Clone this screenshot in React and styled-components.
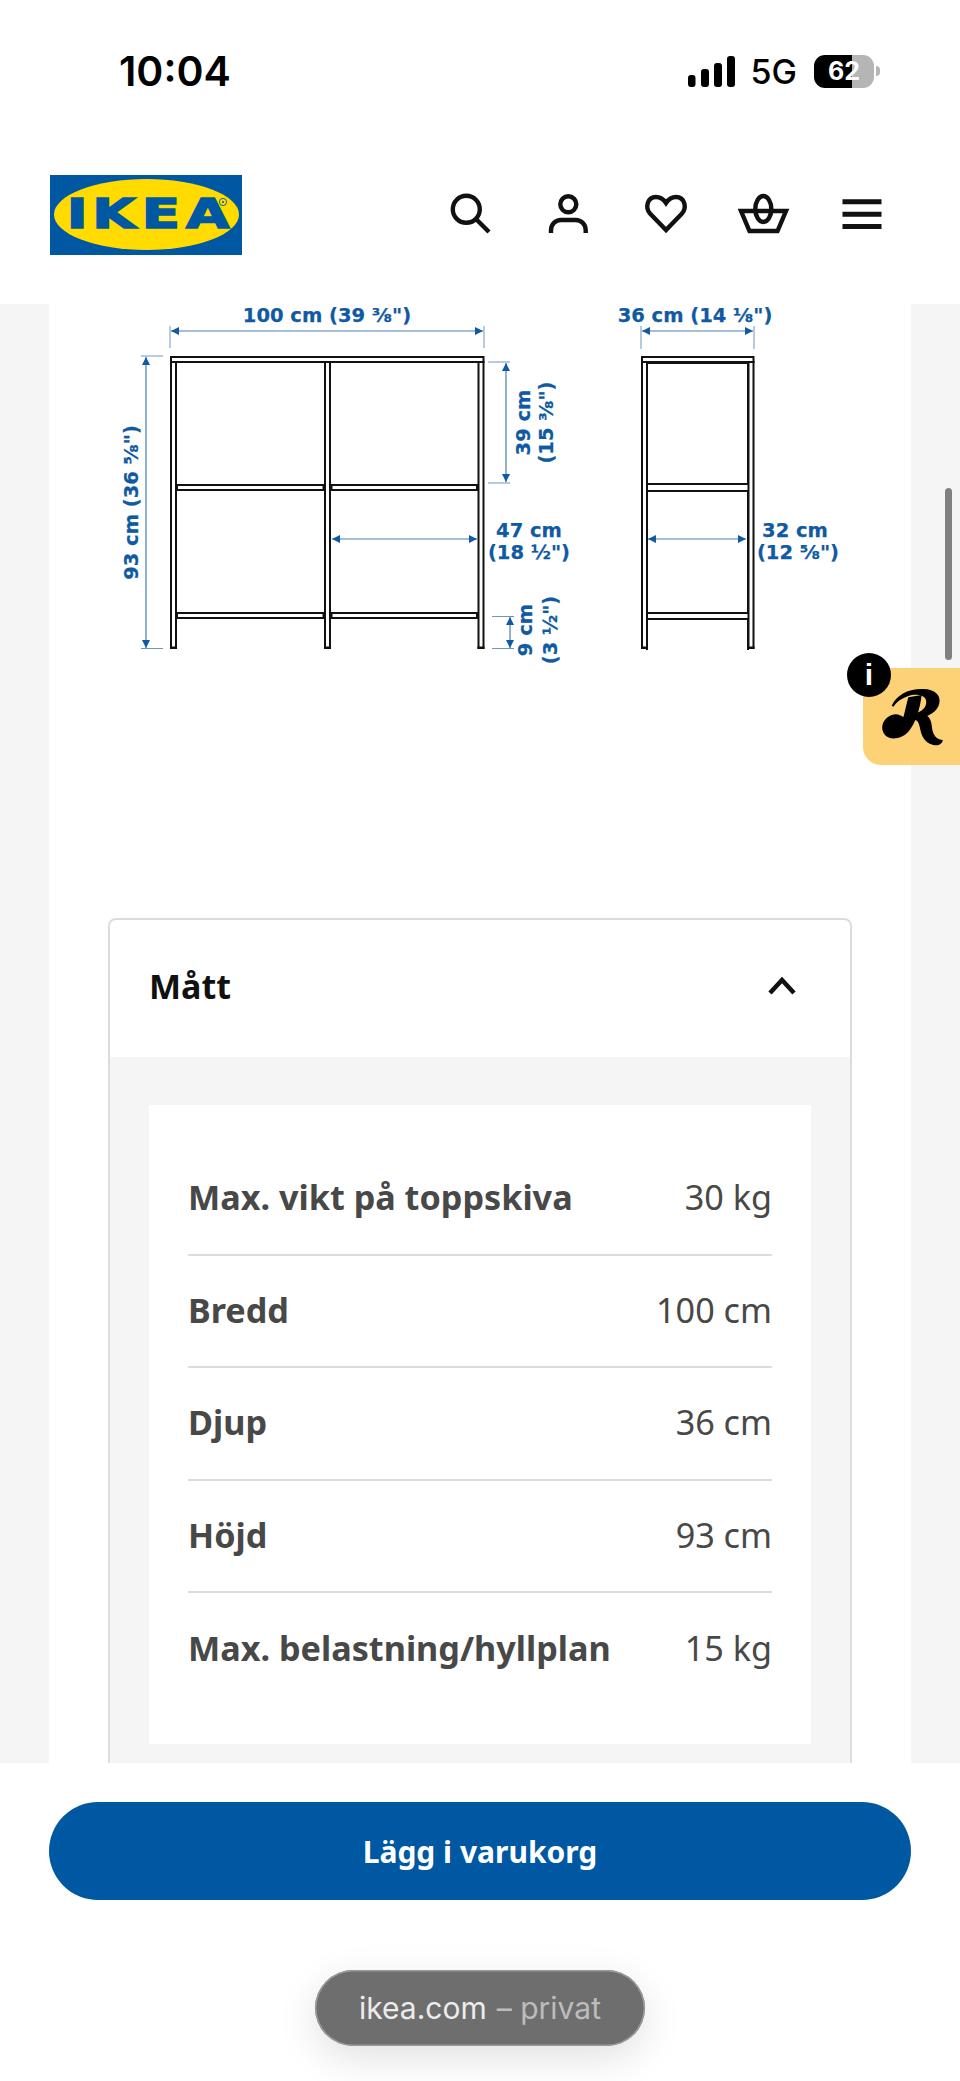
import React from 'react';
import styled, { createGlobalStyle } from 'styled-components';

const GlobalStyle = createGlobalStyle`
  html, body {
    margin: 0;
    padding: 0;
    background: #fff;
  }
  * {
    box-sizing: border-box;
  }
`;

const Page = styled.div`
  position: relative;
  width: 960px;
  height: 2081px;
  overflow: hidden;
  background: #fff;
  font-family: 'Noto Sans', sans-serif;
`;

const StatusBar = styled.div`
  display: flex;
  align-items: center;
  justify-content: space-between;
  height: 142px;
  padding: 0 86px 0 119px;
  font-family: Inter, 'Liberation Sans', sans-serif;
  color: #000;
`;

const Clock = styled.span`
  font-size: 41px;
  font-weight: 600;
`;

const StatusIcons = styled.div`
  display: flex;
  align-items: center;
`;

const NetworkLabel = styled.span`
  margin: 0 17px 0 16px;
  font-size: 34px;
  font-weight: 500;
`;

const Battery = styled.div`
  position: relative;
  display: flex;
  align-items: center;
  justify-content: center;
  width: 60px;
  height: 33px;
  border-radius: 11px;
  background: linear-gradient(to right, #000 63%, #b5b5b5 63%);
  color: #fff;
  font-size: 25px;
  font-weight: 700;

  &::after {
    content: '';
    position: absolute;
    right: -6px;
    top: 11px;
    width: 4px;
    height: 10px;
    border-radius: 0 4px 4px 0;
    background: #b5b5b5;
  }
`;

const Header = styled.header`
  display: flex;
  align-items: center;
  justify-content: space-between;
  height: 162px;
  padding: 0 70px 18px 50px;
`;

const LogoMark = styled.svg`
  display: block;
  width: 192px;
  height: 80px;
  margin-top: 2px;
`;

const NavIcons = styled.nav`
  display: flex;
  gap: 42px;
`;

const NavIcon = styled.svg`
  display: block;
  width: 56px;
  height: 56px;
  fill: none;
  stroke: #111;
  stroke-width: 4.4;
`;

const Content = styled.main`
  background: #f5f5f5;
`;

const Sheet = styled.div`
  width: 862px;
  height: 1777px;
  margin-left: 49px;
  background: #fff;
`;

const Diagram = styled.svg`
  display: block;
  width: 862px;
  height: 614px;
`;

const DimText = styled.text`
  font-family: 'DejaVu Sans', sans-serif;
  font-size: 19.5px;
  font-weight: 700;
  fill: #0f5aa3;
  stroke: #0f5aa3;
  stroke-width: 0.25;
  text-anchor: middle;
  dominant-baseline: central;
`;

const Accordion = styled.section`
  width: 744px;
  margin-left: 59px;
  border: solid #dcdcdc;
  border-width: 2px 2px 0;
  border-radius: 8px 8px 0 0;
`;

const AccordionHead = styled.div`
  display: flex;
  align-items: center;
  justify-content: space-between;
  height: 137px;
  padding: 0 54px 6px 39px;
`;

const AccordionTitle = styled.h2`
  margin: 0;
  font-size: 34px;
  font-weight: 700;
  color: #111;
`;

const Panel = styled.div`
  padding: 48px 39px 60px;
  background: #f5f5f5;
`;

const SpecCard = styled.div`
  padding: 38px 39px;
  background: #fff;
`;

const SpecRow = styled.div`
  display: flex;
  align-items: center;
  justify-content: space-between;
  height: 112.5px;
  padding-bottom: 3px;
  border-bottom: ${p => (p.$last ? 'none' : '2px solid #dcdcdc')};
  color: #484848;
  font-size: 34.2px;
`;

const SpecName = styled.span`
  font-weight: 700;
`;

const SpecValue = styled.span`
  font-weight: 400;
`;

const Footer = styled.footer`
  position: absolute;
  left: 0;
  right: 0;
  bottom: 0;
  display: flex;
  flex-direction: column;
  align-items: center;
  height: 318px;
  padding-top: 39px;
  background: #fff;
`;

const BuyButton = styled.button`
  width: 862px;
  height: 98px;
  border: none;
  border-radius: 49px;
  background: #0058a3;
  color: #fff;
  font-family: inherit;
  font-size: 30px;
  font-weight: 700;
`;

const AddressPill = styled.div`
  display: flex;
  align-items: center;
  justify-content: center;
  gap: 10px;
  width: 330px;
  height: 76px;
  margin-top: 70px;
  border-radius: 38px;
  background: #6e6e6e;
  box-shadow: 0 12px 40px rgba(0, 0, 0, 0.12), inset 0 0 0 1.5px #9a9a9a;
  font-family: Inter, 'Liberation Sans', sans-serif;
  font-size: 30px;
  color: #ececec;
`;

const Private = styled.span`
  color: #bcbcbc;
`;

const ScrollThumb = styled.div`
  position: absolute;
  top: 488px;
  right: 8px;
  width: 7px;
  height: 172px;
  border-radius: 4px;
  background: #808080;
`;

const ReviewBadge = styled.div`
  position: absolute;
  top: 668px;
  left: 863px;
  width: 97px;
  height: 97px;
  border-radius: 18px 0 0 18px;
  background: #fdd277;
`;

const InfoDot = styled.span`
  position: absolute;
  top: -15px;
  left: -16px;
  display: flex;
  align-items: center;
  justify-content: center;
  width: 44px;
  height: 44px;
  border-radius: 50%;
  background: #000;
  color: #fff;
  font-family: 'Liberation Sans', sans-serif;
  font-size: 30px;
  font-weight: 700;
`;

const BadgeMark = styled.svg`
  position: absolute;
  top: 17px;
  left: 17px;
  width: 66px;
  height: 72px;
`;

const specs = [
  ['Max. vikt på toppskiva', '30 kg'],
  ['Bredd', '100 cm'],
  ['Djup', '36 cm'],
  ['Höjd', '93 cm'],
  ['Max. belastning/hyllplan', '15 kg'],
];

const SignalBars = () => (
  <svg width="47" height="31" viewBox="0 0 47 31">
    <rect x="0" y="19" width="7.5" height="12" rx="3" />
    <rect x="13" y="13" width="8" height="18" rx="3" />
    <rect x="26" y="7" width="8" height="24" rx="3" />
    <rect x="39" y="0" width="8" height="31" rx="3" />
  </svg>
);

const Logo = () => (
  <LogoMark viewBox="0 0 192 80">
    <rect width="192" height="80" fill="#0058a3" />
    <ellipse cx="96.5" cy="39.5" rx="92.5" ry="35.5" fill="#ffdb00" />
    {/* stretched wide so the heavy letters sit at their own spots */}
    <text
      x="11.9 30.2 65.500 97.1"
      y="53"
      transform="scale(1.4 1)"
      fontFamily="'DejaVu Sans', sans-serif"
      fontWeight="700"
      fontSize="40"
      fill="#0058a3"
      stroke="#0058a3"
      strokeWidth="1.6"
    >
      IKEA
    </text>
    <circle cx="173" cy="27" r="3.6" fill="none" stroke="#0058a3" strokeWidth="0.9" />
    <circle cx="173" cy="27" r="1" fill="#0058a3" />
  </LogoMark>
);

const SearchIcon = () => (
  <NavIcon viewBox="0 0 56 56">
    <circle cx="24.3" cy="23.3" r="13.5" />
    <path d="M34.5 33.5 47 46" />
  </NavIcon>
);

const PersonIcon = () => (
  <NavIcon viewBox="0 0 56 56">
    <circle cx="28.3" cy="18.3" r="8" />
    <path d="M11 47v-3a10 10 0 0 1 10-10h14.7a10 10 0 0 1 10 10v3" />
  </NavIcon>
);

const HeartIcon = () => (
  <NavIcon viewBox="0 0 56 56">
    <path d="M28 44 12 27.5C7 22 9 11 18 11c5 0 8 3 10 6 2-3 5-6 10-6 9 0 11 11 6 16.5Z" />
  </NavIcon>
);

const BasketIcon = () => (
  <NavIcon viewBox="0 0 56 56">
    <path d="M5 25h45l-8.500 20h-28Z" />
    <ellipse cx="27.300" cy="23" rx="8" ry="13" />
  </NavIcon>
);

const MenuIcon = () => (
  <NavIcon viewBox="0 0 56 56">
    <path d="M8.500 15.800h39M8.500 28.200h39M8.500 40.500h39" strokeWidth="5" />
  </NavIcon>
);

// Dimension arrow with solid heads, horizontal or vertical
const DimLine = ({ x1, y1, x2, y2 }) => {
  const heads = x1 === x2
    ? [`${x1},${y1} ${x1 - 4},${y1 + 8} ${x1 + 4},${y1 + 8}`, `${x2},${y2} ${x2 - 4},${y2 - 8} ${x2 + 4},${y2 - 8}`]
    : [`${x1},${y1} ${x1 + 8},${y1 - 4} ${x1 + 8},${y1 + 4}`, `${x2},${y2} ${x2 - 8},${y2 - 4} ${x2 - 8},${y2 + 4}`];
  return (
    <g>
      <line x1={x1} y1={y1} x2={x2} y2={y2} stroke="#4a7fb5" strokeWidth="1.2" />
      {heads.map(h => <polygon key={h} points={h} fill="#0f5aa3" />)}
    </g>
  );
};

const Tick = props => <line {...props} stroke="#6c97c4" strokeWidth="1" />;

const Label = ({ x, y, turned, children }) => (
  <DimText x={x} y={y} transform={turned ? `rotate(-90 ${x} ${y})` : undefined}>
    {children}
  </DimText>
);

// Board drawn as a white bar with a black outline
const Board = ({ x, y, w, h }) => (
  <rect x={x + 1} y={y + 1} width={w - 2} height={h - 2} fill="#fff" stroke="#111" strokeWidth="2" />
);

const Leg = ({ x }) => (
  <g>
    <Board x={x} y={361} w={7} h={288} />
    <rect x={x} y={646.500} width="7" height="2.500" fill="#111" />
  </g>
);

const ShelfDrawing = () => (
  <Diagram viewBox="49 304 862 614">
    {/* front view */}
    <Leg x={170} />
    <Leg x={324} />
    <Leg x={477.500} />
    <Board x={176} y={484} w={148.500} h={7} />
    <Board x={330.500} y={484} w={147.500} h={7} />
    <Board x={176} y={612} w={148.500} h={7} />
    <Board x={330.500} y={612} w={147.500} h={7} />
    <Board x={170} y={356} w={314.500} h={7} />

    <DimLine x1={171} y1={331} x2={483} y2={331} />
    <Tick x1={170} y1={326} x2={170} y2={348} />
    <Tick x1={484} y1={326} x2={484} y2={348} />
    <Label x={327} y={315}>100 cm (39 ⅜")</Label>

    <DimLine x1={146} y1={357} x2={146} y2={648} />
    <Tick x1={141} y1={356} x2={163} y2={356} />
    <Tick x1={141} y1={648.500} x2={163} y2={648.500} />
    <Label x={131} y={502.500} turned>93 cm (36 ⅝")</Label>

    <DimLine x1={506} y1={363} x2={506} y2={482} />
    <Tick x1={488} y1={362} x2={510} y2={362} />
    <Tick x1={488} y1={483} x2={510} y2={483} />
    <Label x={523} y={422.500} turned>39 cm</Label>
    <Label x={546.500} y={422.500} turned>(15 ⅜")</Label>

    <DimLine x1={332} y1={539} x2={477} y2={539} />
    <Label x={529} y={530}>47 cm</Label>
    <Label x={529} y={552.500}>(18 ½")</Label>

    <DimLine x1={510} y1={617} x2={510} y2={648} />
    <Tick x1={492} y1={616.500} x2={514} y2={616.500} />
    <Tick x1={492} y1={648.500} x2={514} y2={648.500} />
    <Label x={525.500} y={630} turned>9 cm</Label>
    <Label x={550} y={630} turned>(3 ½")</Label>

    {/* side view */}
    <Leg x={641} />
    <Leg x={747.500} />
    <Board x={646} y={362} w={103} h={123} />
    <Board x={646} y={490} w={103} h={124} />
    <Board x={646} y={618} w={103} h={32} />
    <rect x="648" y="647" width="99" height="4" fill="#fff" />
    <Board x={641} y={356} w={113.500} h={7} />

    <DimLine x1={642} y1={331} x2={753} y2={331} />
    <Tick x1={641} y1={326} x2={641} y2={349} />
    <Tick x1={754} y1={326} x2={754} y2={349} />
    <Label x={695} y={315.500}>36 cm (14 ⅛")</Label>

    <DimLine x1={648} y1={539} x2={746} y2={539} />
    <Label x={795} y={530}>32 cm</Label>
    <Label x={798} y={552.500}>(12 ⅝")</Label>
  </Diagram>
);

const Chevron = () => (
  <svg width="28" height="18" viewBox="0 0 28 18" fill="none" stroke="#111" strokeWidth="4.500">
    <path d="M2 16 14 3l12 13" />
  </svg>
);

const App = () => (
  <Page>
    <GlobalStyle />
    <StatusBar>
      <Clock>10:04</Clock>
      <StatusIcons>
        <SignalBars />
        <NetworkLabel>5G</NetworkLabel>
        <Battery>62</Battery>
      </StatusIcons>
    </StatusBar>
    <Header>
      <Logo />
      <NavIcons>
        <SearchIcon />
        <PersonIcon />
        <HeartIcon />
        <BasketIcon />
        <MenuIcon />
      </NavIcons>
    </Header>
    <Content>
      <Sheet>
        <ShelfDrawing />
        <Accordion>
          <AccordionHead>
            <AccordionTitle>Mått</AccordionTitle>
            <Chevron />
          </AccordionHead>
          <Panel>
            <SpecCard>
              {specs.map(([name, value], i) => (
                <SpecRow key={name} $last={i === specs.length - 1}>
                  <SpecName>{name}</SpecName>
                  <SpecValue>{value}</SpecValue>
                </SpecRow>
              ))}
            </SpecCard>
          </Panel>
        </Accordion>
      </Sheet>
    </Content>
    <ScrollThumb />
    <ReviewBadge>
      <InfoDot>i</InfoDot>
      <BadgeMark viewBox="120 135 198 216">
        <path d="M155 197C170 165 205 145 250 147c35 1 53 18 48 43-5 25-33 42-66 46v-18c18-6 30-20 26-38-4-15-33-20-53-12-20 7-35 17-45 32Z" />
        <path d="M205 172l40-7c-5 40-17 85-40 110-20 22-55 27-70 10-17-20-7-50 20-60 15-5 27 0 35 7 5-17 10-42 15-60Z" />
        <path d="M225 222c30-7 47 6 50 33 2 25 10 43 33 45 0 12-13 18-28 15-25-5-35-25-40-50-3-17-8-25-15-25Z" />
      </BadgeMark>
    </ReviewBadge>
    <Footer>
      <BuyButton>Lägg i varukorg</BuyButton>
      <AddressPill>
        <span>ikea.com</span>
        <Private>– privat</Private>
      </AddressPill>
    </Footer>
  </Page>
);

export default App;
